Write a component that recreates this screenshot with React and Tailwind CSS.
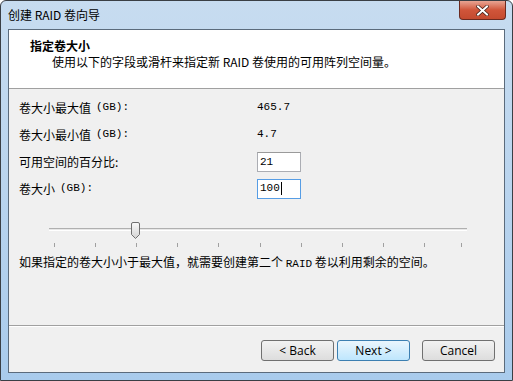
import React, { useState } from 'react';

const CJK = "font-['Noto_Sans_CJK_SC',sans-serif]";
const MONO = "font-['Liberation_Mono','Noto_Sans_CJK_SC',monospace] text-[11px]";

const ticks = [53, 94, 135, 176, 217, 259, 300, 341, 382, 423, 460];

const Row = ({ label, unit, children }) => (
  <div className="flex items-center h-[27px]">
    <div className="w-[238px] flex items-center text-[12px] text-black">
      <span>{label}</span>
      {unit && <span className={MONO + ' ml-[5px]'}>{unit}</span>}
    </div>
    {children}
  </div>
);

const Btn = ({ children, focused }) => (
  <button
    className={
      'block w-[73px] h-[21px] rounded-[3px] text-[12px] text-black font-["Open_Sans",sans-serif] leading-none ' +
      (focused
        ? 'border border-[#3c7fb1] bg-gradient-to-b from-[#eaf6fd] to-[#bee6fd]'
        : 'border border-[#707070] bg-gradient-to-b from-[#f2f2f2] to-[#dddddd]')
    }
  >
    {children}
  </button>
);

const App = () => {
  const [pct, setPct] = useState('21');
  const [size, setSize] = useState('100');

  return (
    <div className={'w-[513px] h-[381px] flex flex-col overflow-hidden rounded-t-[6px] border border-[#3a3f45] bg-gradient-to-b from-[#c7dcf0] via-[#b9d4ee] to-[#a9cbec] ' + CJK}>
      {/* title bar */}
      <div className="h-[28px] flex items-start justify-between pl-[7px] pr-[6px]">
        <span className="mt-[6px] text-[12px] text-black leading-[16px]">创建 RAID 卷向导</span>
        <div className="w-[47px] h-[19px] rounded-b-[4px] border border-[#6b2a20] border-t-0 bg-gradient-to-b from-[#e8a493] via-[#d0553a] to-[#c44a2f] flex items-center justify-center">
          <svg width="13" height="11" viewBox="0 0 13 11">
            <path d="M2 1.5 L11 9.5 M11 1.5 L2 9.5" stroke="#3a1a14" strokeWidth="3.4" strokeLinecap="square" />
            <path d="M2 1.5 L11 9.5 M11 1.5 L2 9.5" stroke="#ffffff" strokeWidth="2" strokeLinecap="square" />
          </svg>
        </div>
      </div>

      {/* client area */}
      <div className="mx-[7px] mb-[7px] flex-1 flex flex-col border border-[#5b6b7c] bg-[#f0f0f0]">
        <div className="h-[59px] bg-white border-b border-[#a0a0a0] pt-[8px]">
          <div className="pl-[21px] text-[12px] font-bold leading-[16px] text-black">指定卷大小</div>
          <div className="pl-[43px] text-[12px] leading-[16px] text-black">使用以下的字段或滑杆来指定新 RAID 卷使用的可用阵列空间量。</div>
        </div>

        <div className="flex-1 flex flex-col pl-[10px] pt-[5px] border-b border-[#a0a0a0]">
          <Row label="卷大小最大值" unit="(GB):">
            <span className={MONO}>465.7</span>
          </Row>
          <Row label="卷大小最小值" unit="(GB):">
            <span className={MONO}>4.7</span>
          </Row>
          <Row label="可用空间的百分比:">
            <input
              value={pct}
              onChange={(e) => setPct(e.target.value)}
              className={'w-[44px] h-[20px] bg-white border border-[#abadb3] border-t-[#9a9a9a] px-[2px] outline-none ' + MONO}
            />
          </Row>
          <Row label="卷大小" unit="(GB):">
            <div className={'w-[44px] h-[20px] bg-white border border-[#569de5] px-[2px] flex items-center ' + MONO}>
              <input
                value={size}
                onChange={(e) => setSize(e.target.value)}
                size={3}
                className="w-[21px] bg-transparent outline-none"
              />
              <span className="w-px h-[13px] bg-black" />
            </div>
          </Row>

          {/* slider */}
          <div className="relative h-[36px] mt-[16px] -ml-[10px]">
            <div className="absolute left-[40px] w-[418px] top-[10px] h-[3px] border-t border-[#b0b0b0] border-b border-b-white bg-[#e7e7e7]" />
            <svg className="absolute left-[121px] top-[4px]" width="11" height="18" viewBox="0 0 11 18">
              <defs>
                <linearGradient id="th" x1="0" y1="0" x2="0" y2="1">
                  <stop offset="0" stopColor="#fafafa" />
                  <stop offset="1" stopColor="#d2d2d2" />
                </linearGradient>
              </defs>
              <path d="M1.5 2 Q1.5 0.5 3 0.5 L8 0.5 Q9.5 0.5 9.5 2 L9.5 12.5 L5.5 16.5 L1.5 12.5 Z" fill="url(#th)" stroke="#707070" />
            </svg>
            {ticks.map((x) => (
              <div key={x} className="absolute top-[25px] w-px h-[4px] bg-[#a0a0a0]" style={{ left: x - 8 }} />
            ))}
          </div>

          <div className="text-[12px] leading-[16px] text-black">
            如果指定的卷大小小于最大值，就需要创建第二个 <span className={MONO}>RAID</span> 卷以利用剩余的空间。
          </div>
        </div>

        <div className="h-[46px] border-t border-white flex items-start pt-[13px] pl-[252px]">
          <Btn>&lt; Back</Btn>
          <div className="ml-[3px] flex">
            <Btn focused>Next &gt;</Btn>
          </div>
          <div className="ml-[12px] flex">
            <Btn>Cancel</Btn>
          </div>
        </div>
      </div>
    </div>
  );
};

export default App;
